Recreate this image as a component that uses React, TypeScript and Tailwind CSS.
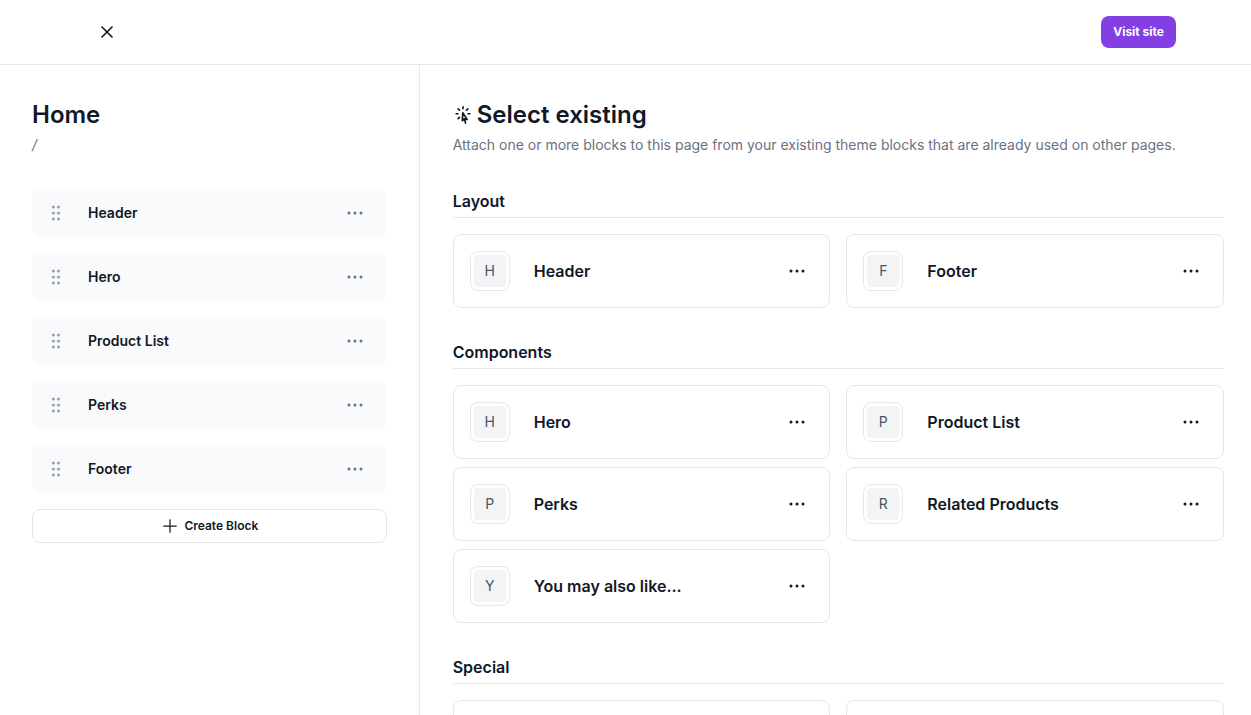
import React from "react";
import {
  HiOutlineCursorArrowRays,
  HiOutlineEllipsisHorizontal,
  HiOutlinePlus,
  HiOutlineXMark,
} from "react-icons/hi2";

const pageBlocks = ["Header", "Hero", "Product List", "Perks", "Footer"];

const sections = [
  { title: "Layout", blocks: ["Header", "Footer"] },
  {
    title: "Components",
    blocks: ["Hero", "Product List", "Perks", "Related Products", "You may also like..."],
  },
  { title: "Special", blocks: ["", ""] },
];

function GripIcon() {
  return (
    <svg viewBox="0 0 16 16" className="size-4" fill="currentColor" aria-hidden="true">
      {[2, 8, 14].map((y) => (
        <React.Fragment key={y}>
          <circle cx="5.4" cy={y} r="1.6" />
          <circle cx="10.5" cy={y} r="1.6" />
        </React.Fragment>
      ))}
    </svg>
  );
}

function PageBlock({ name }: { name: string }) {
  return (
    <li className="flex h-12 items-center rounded-lg bg-gray-50 px-4">
      <button
        type="button"
        aria-label={`Move ${name}`}
        className="mr-6 flex size-4 cursor-grab items-center justify-center text-gray-400"
      >
        <GripIcon />
      </button>
      <span className="flex-1 text-sm font-semibold">{name}</span>
      <button type="button" aria-label={`${name} options`} className="mr-1 text-gray-500">
        <HiOutlineEllipsisHorizontal className="size-6" />
      </button>
    </li>
  );
}

function BlockCard({ name }: { name: string }) {
  return (
    <li className="flex items-center rounded-lg border border-[#e5e7eb] p-4">
      <span className="mr-6 flex size-10 items-center justify-center rounded-lg border border-[#e5e7eb] bg-white">
        <span className="flex size-8 items-center justify-center rounded bg-gray-100 text-sm text-gray-600">
          {name.charAt(0)}
        </span>
      </span>
      <span className="flex-1 text-base font-semibold">{name}</span>
      <button type="button" aria-label={`${name} options`} className="mr-1">
        <HiOutlineEllipsisHorizontal className="size-6" />
      </button>
    </li>
  );
}

export default function App() {
  return (
    <div className="flex h-screen flex-col overflow-hidden bg-white font-['Inter',sans-serif] text-[#111827]">
      <header className="flex shrink-0 items-center justify-between border-b border-[#e5e7eb] py-4 pr-[75px] pl-[97px]">
        <button type="button" aria-label="Close">
          <HiOutlineXMark className="size-5" strokeWidth={2} />
        </button>
        <a
          href="#site"
          className="flex h-8 items-center rounded-lg bg-[#843fe4] px-3 text-xs font-bold text-white"
        >
          Visit site
        </a>
      </header>
      <div className="flex min-h-0 flex-1">
        <aside className="w-[33.55%] shrink-0 overflow-y-auto border-r border-[#e5e7eb] px-8 pt-8">
          <h1 className="text-2xl leading-9 font-semibold">Home</h1>
          <p className="text-sm leading-6 text-gray-500 italic">/</p>
          <ul className="mt-8 flex flex-col gap-4">
            {pageBlocks.map((name) => (
              <PageBlock key={name} name={name} />
            ))}
          </ul>
          <button
            type="button"
            className="mt-4 flex h-[34px] w-full items-center justify-center gap-1 rounded-lg border border-[#e5e7eb] text-xs font-semibold"
          >
            <HiOutlinePlus className="size-5" />
            Create Block
          </button>
        </aside>
        <main className="min-w-0 flex-1 overflow-hidden pt-8 pr-[27px] pl-[33px]">
          <h2 className="flex items-center gap-1 text-2xl leading-9 font-semibold">
            <HiOutlineCursorArrowRays className="size-5" strokeWidth={2} />
            Select existing
          </h2>
          <p className="text-sm leading-6 text-gray-500">
            Attach one or more blocks to this page from your existing theme blocks that are already used on other pages.
          </p>
          <div className="mt-8 flex flex-col gap-8">
            {sections.map(({ title, blocks }) => (
              <section key={title}>
                <h3 className="border-b border-[#e5e7eb] pb-1 text-base font-semibold">{title}</h3>
                <ul className="mt-4 grid grid-cols-2 gap-x-4 gap-y-2">
                  {blocks.map((name, index) => (
                    <BlockCard key={index} name={name} />
                  ))}
                </ul>
              </section>
            ))}
          </div>
        </main>
      </div>
    </div>
  );
}
